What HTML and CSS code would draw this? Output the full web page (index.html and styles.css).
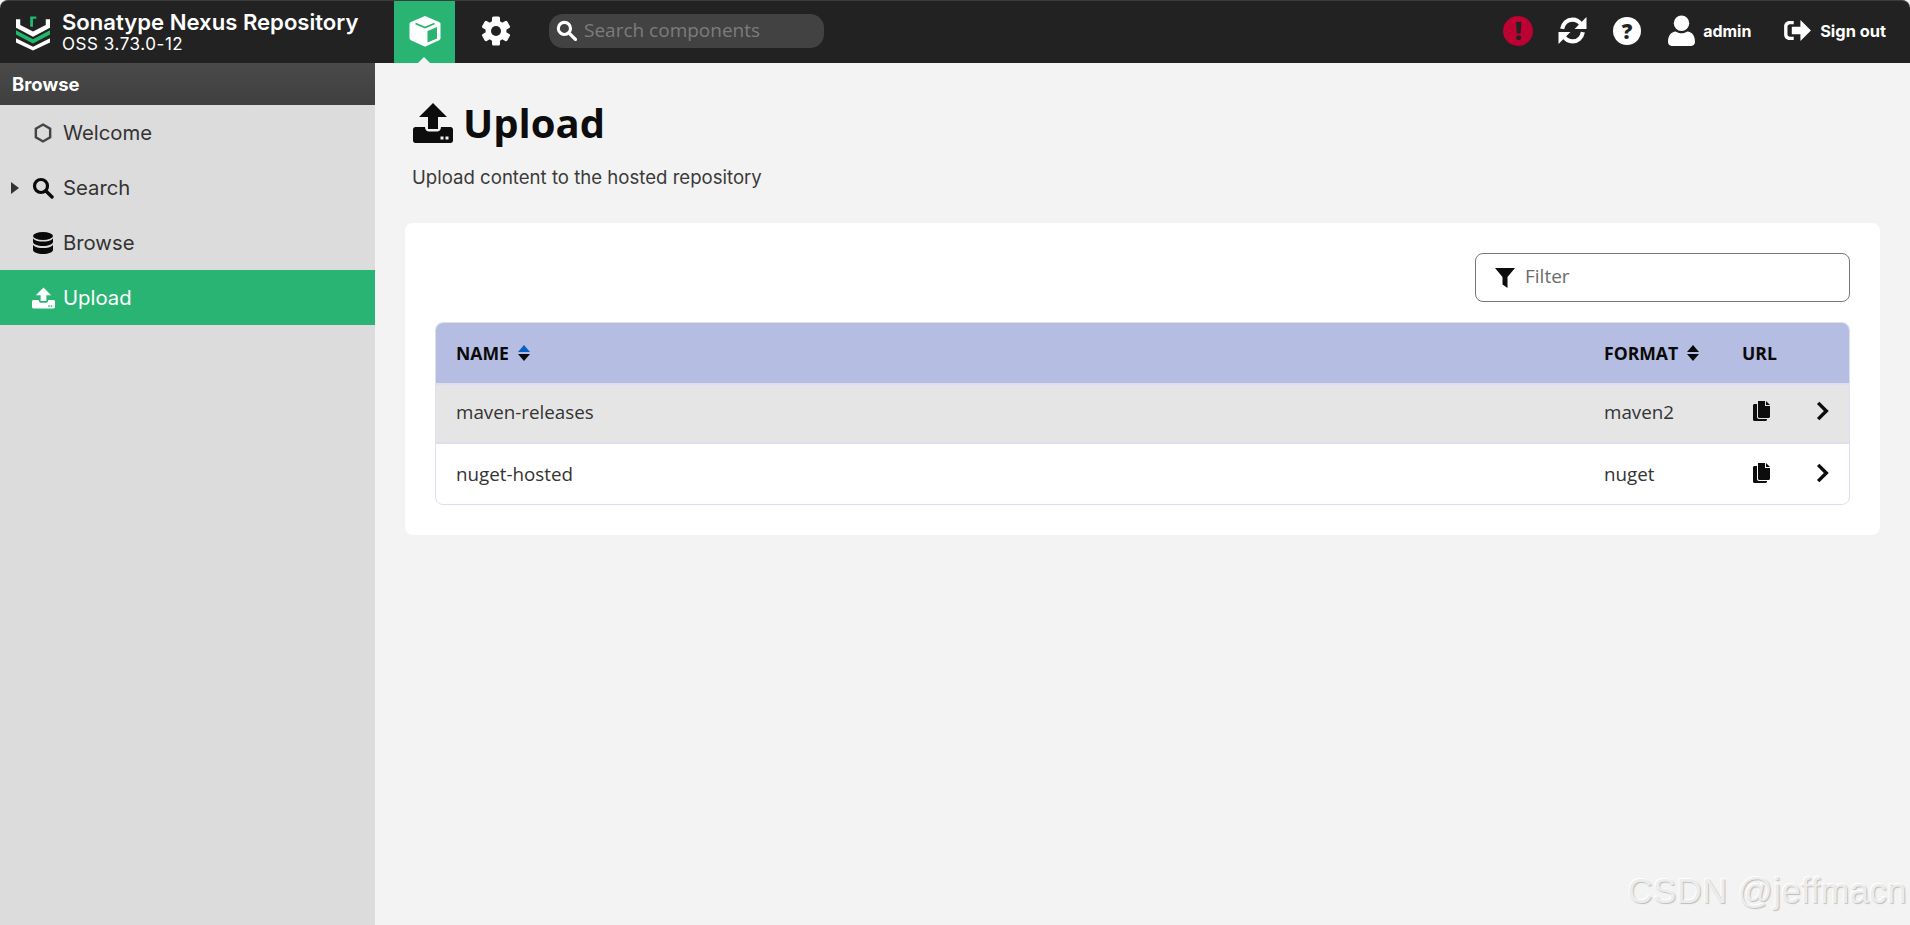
FILE: index.html
```html
<!DOCTYPE html>
<html lang="en">
<head>
<meta charset="utf-8">
<title>Upload - Nexus Repository</title>
<link rel="stylesheet" href="styles.css">
</head>
<body>
<div class="app">
  <header class="topbar">
    <div class="brand">
      <svg class="logo" viewBox="0 0 36 37"><path d="M0 4h4.500v6L18 17l13.500-7V4H36v9L18 22.500 0 13z" fill="#fff"/><path d="M0 15.500 18 25l18-9.500V20L18 29.500 0 20z" fill="#20b96a"/><path d="M0 24l18 9 18-9v4.500L18 37 0 28.500z" fill="#fff"/><path d="M15 1h6.500v2.500H18V12h-3z" fill="#20b96a"/></svg>
      <div class="brand-text">
        <div class="brand-name">Sonatype Nexus Repository</div>
        <div class="brand-version">OSS 3.73.0-12</div>
      </div>
    </div>
    <nav class="modes">
      <div class="mode mode-active">
        <svg class="cube" viewBox="0 0 32 32"><path d="M16 1 30 7c1 .5 1.500 1 1.500 2v14c0 1-.5 1.800-1.500 2.300L16.500 31.500h-1L2 25.300C1 24.800.5 24 .5 23V9c0-1 .5-1.500 1.500-2z" fill="#fff"/><path d="M6.500 8.500 16 12.500l9.500-4" fill="none" stroke="#29b473" stroke-width="1.800"/><path d="M18.500 16 28 12v11.500L18.500 27.500z" fill="#29b473"/></svg>
        <span class="mode-caret"></span>
      </div>
      <div class="mode mode-gear">
        <svg class="gear" viewBox="0 0 30 30">
          <circle class="gear-body" cx="15" cy="15" r="10.500"/>
          <rect class="gear-body" x="11" y="0.500" width="8" height="8" rx="1.500"/>
          <rect class="gear-body" x="11" y="0.500" width="8" height="8" rx="1.500" transform="rotate(60 15 15)"/>
          <rect class="gear-body" x="11" y="0.500" width="8" height="8" rx="1.500" transform="rotate(120 15 15)"/>
          <rect class="gear-body" x="11" y="0.500" width="8" height="8" rx="1.500" transform="rotate(180 15 15)"/>
          <rect class="gear-body" x="11" y="0.500" width="8" height="8" rx="1.500" transform="rotate(240 15 15)"/>
          <rect class="gear-body" x="11" y="0.500" width="8" height="8" rx="1.500" transform="rotate(300 15 15)"/>
          <circle class="gear-hole" cx="15" cy="15" r="5"/>
        </svg>
      </div>
    </nav>
    <div class="search">
      <svg class="search-icon" viewBox="0 0 20 20"><circle cx="8" cy="8" r="5.800" fill="none" stroke="#fff" stroke-width="3"/><path d="m12.500 12.500 6 6" stroke="#fff" stroke-width="3.200" stroke-linecap="round"/></svg>
      <span class="search-text">Search components</span>
    </div>
    <div class="actions">
      <div class="alert">!</div>
      <svg class="act-refresh" viewBox="0 0 28 28"><path fill="none" stroke="#fff" stroke-width="4" d="M4 12.500C5 7 9 3.500 14 3.500c3.500 0 6.300 1.500 8.300 4.500"/><path fill="#fff" d="M27.500 1v11.500H16z"/><path fill="none" stroke="#fff" stroke-width="4" d="M24 15.500C23 21 19 24.500 14 24.500c-3.500 0-6.300-1.500-8.300-4.500"/><path fill="#fff" d="M.5 27V15.500H12z"/></svg>
      <div class="help">?</div>
      <div class="user">
        <svg class="user-icon" viewBox="0 0 28 32"><circle cx="14" cy="8.500" r="8" fill="#fff"/><path fill="#fff" d="M0 28c0-7 3-10.500 8-11 3.500 2.500 8.500 2.500 12 0 5 .5 8 4 8 11 0 2.500-1.500 4-4 4H4c-2.500 0-4-1.500-4-4z"/></svg>
        <span class="user-name">admin</span>
      </div>
      <div class="signout">
        <svg class="signout-icon" viewBox="0 0 30 24"><path fill="#fff" d="M10 2v3.500H6c-1.300 0-2.500 1-2.500 2.500v8c0 1.500 1.200 2.500 2.500 2.500h4V22H5.500C2.500 22 0 19.500 0 16.500v-9C0 4.500 2.500 2 5.500 2z"/><path fill="#fff" d="M8 8h9V1l11 11-11 11v-7H8z"/></svg>
        <span class="signout-text">Sign out</span>
      </div>
    </div>
  </header>
  <div class="main">
    <aside class="sidebar">
      <div class="side-head">Browse</div>
      <div class="side-row">
        <svg class="side-icon" viewBox="0 0 20 20"><path d="M10 2.300 16.500 6v8L10 17.700 3.500 14V6z" fill="none" stroke="#444" stroke-width="2.200"/></svg>
        <span>Welcome</span>
      </div>
      <div class="side-row">
        <span class="side-caret"></span>
        <svg class="side-icon" viewBox="0 0 22 22"><circle cx="9" cy="9" r="6.500" fill="none" stroke="#0a0a0a" stroke-width="3.200"/><path d="m14 14 6 6" stroke="#0a0a0a" stroke-width="3.400" stroke-linecap="round"/></svg>
        <span>Search</span>
      </div>
      <div class="side-row">
        <svg class="side-icon" viewBox="0 0 20 22"><ellipse cx="10" cy="4" rx="10" ry="4" fill="#0a0a0a"/><path fill="#0a0a0a" d="M0 6.500C2 9 6 9.500 10 9.500s8-.5 10-3V10c0 2.300-4.500 4-10 4S0 12.300 0 10zM0 13c2 2.500 6 3 10 3s8-.5 10-3v5c0 2.300-4.500 4-10 4S0 20.300 0 18z"/></svg>
        <span>Browse</span>
      </div>
      <div class="side-row side-row-active">
        <svg class="side-icon side-upload" viewBox="0 0 24 22"><path fill="#fff" fill-rule="evenodd" d="M12 0 20 8h-5v6H9V8H4zM1.500 13H7c0 2 1.500 3 2.500 3h5c1 0 2.500-1 2.500-3h5.500c.8 0 1.500.7 1.500 1.500v6c0 .8-.7 1.500-1.500 1.500h-21C.7 22 0 21.300 0 20.500v-6C0 13.700.7 13 1.500 13zM17 18.500h1.500V20H17zm2.500 0H21V20h-1.500z"/></svg>
        <span>Upload</span>
      </div>
    </aside>
    <main class="content">
      <div class="page-head">
        <svg class="page-icon" viewBox="0 0 40 40"><path fill="#0d0d0d" fill-rule="evenodd" d="M20 0 34 14h-9v12H15V14H6zM2.500 24H12c0 3 2 4.500 4 4.500h8c2 0 4-1.500 4-4.500h9.500c1.400 0 2.500 1.100 2.500 2.500v11c0 1.400-1.100 2.500-2.500 2.500h-35C1.100 40 0 38.900 0 37.500v-11C0 25.100 1.100 24 2.500 24zM27.500 33.500h3v3h-3zm5 0h3v3h-3z"/></svg>
        <h1 class="page-title">Upload</h1>
      </div>
      <p class="page-sub">Upload content to the hosted repository</p>
      <section class="card">
        <div class="filter-row">
          <div class="filter">
            <svg class="filter-icon" viewBox="0 0 20 20"><path fill="#0d0d0d" d="M0 0h20l-7.500 9v11l-5-3.500V9z"/></svg>
            <span class="filter-text">Filter</span>
          </div>
        </div>
        <div class="table">
          <div class="tr th">
            <div class="cell">NAME<svg class="sort" viewBox="0 0 12 16"><path fill="#0a5fc4" d="M6 0l6 7H0z"/><path fill="#0a0a0a" d="M6 16l6-7H0z"/></svg></div>
            <div class="cell">FORMAT<svg class="sort" viewBox="0 0 12 16"><path fill="#0a0a0a" d="M6 0l6 7H0zM6 16l6-7H0z"/></svg></div>
            <div class="cell">URL</div>
            <div class="cell"></div>
          </div>
          <div class="tr td td-hover">
            <div class="cell">maven-releases</div>
            <div class="cell">maven2</div>
            <div class="cell"><svg class="copy" viewBox="0 0 18 20"><path fill="#0d0d0d" d="M5 0h7v5h5v10.500c0 .8-.7 1.500-1.500 1.500H6.500C5.700 17 5 16.300 5 15.500zM13 0l4 4h-4z"/><path fill="#0d0d0d" d="M0 4.500C0 3.700.7 3 1.500 3H4v13c0 1.100.9 2 2 2h8v.5c0 .8-.7 1.500-1.500 1.500h-11C.7 20 0 19.300 0 18.500z"/></svg></div>
            <div class="cell"><svg class="chev" viewBox="0 0 12 18"><path d="m2 1.500 7.500 7.500L2 16.500" fill="none" stroke="#0d0d0d" stroke-width="3.200"/></svg></div>
          </div>
          <div class="tr td">
            <div class="cell">nuget-hosted</div>
            <div class="cell">nuget</div>
            <div class="cell"><svg class="copy" viewBox="0 0 18 20"><path fill="#0d0d0d" d="M5 0h7v5h5v10.500c0 .8-.7 1.500-1.500 1.500H6.500C5.700 17 5 16.300 5 15.500zM13 0l4 4h-4z"/><path fill="#0d0d0d" d="M0 4.500C0 3.700.7 3 1.500 3H4v13c0 1.100.9 2 2 2h8v.5c0 .8-.7 1.500-1.500 1.500h-11C.7 20 0 19.300 0 18.500z"/></svg></div>
            <div class="cell"><svg class="chev" viewBox="0 0 12 18"><path d="m2 1.500 7.500 7.500L2 16.500" fill="none" stroke="#0d0d0d" stroke-width="3.200"/></svg></div>
          </div>
        </div>
      </section>
    </main>
  </div>
  <div class="watermark">CSDN @jeffmacn</div>
</div>
</body>
</html>
```

FILE: styles.css
```css
* { box-sizing: border-box; }
html, body { margin: 0; height: 100%; background: #f3f3f3; overflow: hidden; }
body { font-family: "Inter", "Liberation Sans", sans-serif; color: #2f2f2f; }
.app { position: relative; height: 925px; display: flex; flex-direction: column; }

.topbar {
  height: 63px; flex: none; display: flex; align-items: center;
  background: #222; border-top: 1px solid #3c3c3c; border-radius: 8px 8px 0 0;
  color: #fff;
}
.brand { width: 394px; flex: none; display: flex; align-items: center; padding-left: 16px; }
.logo { width: 34px; height: 36px; flex: none; margin-right: 12px; margin-top: 1px; }
.brand-text { line-height: 1; margin-top: -2px; }
.brand-name { font-size: 22.100px; font-weight: 600; line-height: 25px; white-space: nowrap; }
.brand-version { font-size: 17px; line-height: 18px; letter-spacing: .55px; }

.modes { display: flex; flex: none; height: 62px; }
.mode { width: 61px; height: 62px; display: flex; align-items: center; justify-content: center; position: relative; }
.mode-active { background: #29b473; }
.mode-gear { width: 82px; }
.cube { width: 32px; height: 32px; margin-bottom: 2px; }
.mode-caret {
  position: absolute; bottom: 0; left: 24px; width: 0; height: 0;
  border-left: 6px solid transparent; border-right: 6px solid transparent; border-bottom: 6px solid #f3f3f3;
}
.gear { width: 30px; height: 30px; margin-bottom: 2px; }
.gear-body { fill: #fff; }
.gear-hole { fill: #222; }

.search {
  margin-left: 12px; margin-bottom: 3px; width: 275px; height: 34px; flex: none; border-radius: 14px;
  background: #424242; display: flex; align-items: center; padding-left: 7px;
}
.search-icon { width: 21px; height: 21px; flex: none; }
.search-text { margin: 0 0 2px 7px; font-family: "Open Sans", sans-serif; font-size: 19px; color: #7c7c7c; white-space: nowrap; }

.actions { margin-left: auto; display: flex; align-items: center; margin-bottom: 3px; }
.alert {
  width: 30px; height: 30px; border-radius: 50%; background: #bb0233; color: #222;
  font-family: "Open Sans", sans-serif; font-weight: 800; font-size: 24px; line-height: 30px; text-align: center;
  margin-right: 25px;
}
.act-refresh { width: 29px; height: 29px; margin-right: 26px; flex: none; }
.help {
  width: 28px; height: 28px; border-radius: 50%; background: #fff; color: #222;
  font-family: "Open Sans", sans-serif; font-weight: 800; font-size: 21px; line-height: 28px; text-align: center;
  margin-right: 27px;
}
.user { display: flex; align-items: center; margin-right: 32px; }
.user-icon { width: 27px; height: 31px; flex: none; margin-right: 8px; }
.user-name { font-size: 16px; font-weight: 700; width: 49px; white-space: nowrap; }
.signout { display: flex; align-items: center; margin-right: 24px; }
.signout-icon { width: 29px; height: 23px; flex: none; margin-right: 7px; }
.signout-text { font-size: 16.400px; font-weight: 700; white-space: nowrap; }

.main { flex: 1; display: flex; min-height: 0; }
.sidebar { width: 375px; flex: none; background: #dcdcdc; }
.side-head {
  height: 42px; background: linear-gradient(#4a4a4a, #3f3f3f); color: #fff;
  font-size: 18.500px; font-weight: 700; line-height: 43px; padding-left: 12px;
}
.side-row {
  height: 55px; display: flex; align-items: center; padding-left: 32px; position: relative;
  font-size: 20.300px; color: #333;
}
.side-row-active { background: #29b473; color: #fff; }
.side-icon { width: 22px; height: 22px; flex: none; margin-right: 9px; }
.side-upload { width: 23px; margin-right: 8px; }
.side-caret {
  position: absolute; left: 11px; top: 22px; width: 0; height: 0;
  border-top: 6px solid transparent; border-bottom: 6px solid transparent; border-left: 8px solid #333;
}

.content { flex: 1; min-width: 0; padding: 38px 30px 0; }
.page-head { display: flex; align-items: center; padding-left: 8px; height: 44px; }
.page-icon { width: 40px; height: 40px; flex: none; margin-right: 10px; }
.page-title {
  margin: 0; font-family: "Open Sans", sans-serif; font-size: 40px; font-weight: 700; color: #0d0d0d; line-height: 44px;
}
.page-sub { margin: 21px 0 0 7px; font-size: 18.600px; line-height: 22px; color: #3a3a3a; }
.card { margin-top: 35px; height: 312px; background: #fff; border-radius: 8px; padding: 30px; }
.filter-row { display: flex; justify-content: flex-end; height: 49px; }
.filter {
  width: 375px; height: 49px; border: 1px solid #777; border-radius: 8px;
  display: flex; align-items: center; padding-left: 19px;
}
.filter-icon { width: 20px; height: 20px; flex: none; margin-right: 10px; }
.filter-text { font-family: "Open Sans", sans-serif; font-size: 19px; color: #6b6b6b; margin-bottom: 3px; }
.table {
  margin-top: 20px; border: 1px solid #dddff0; border-radius: 8px; overflow: hidden;
  font-family: "Open Sans", sans-serif;
}
.tr { display: grid; grid-template-columns: 1148px 138px 74px 1fr; align-items: center; }
.th { height: 62px; background: #b5bde2; font-weight: 700; font-size: 17.600px; color: #0a0a0a; border-bottom: 2px solid #dddff0; }
.td { height: 59px; font-size: 18.800px; color: #333; border-bottom: 2px solid #dddff0; }
.td:last-child { border-bottom: 0; height: 60px; }
.td-hover { background: #e5e5e5; padding-bottom: 3px; }
.cell { padding-left: 20px; display: flex; align-items: center; white-space: nowrap; }
.sort { width: 12px; height: 16px; margin-left: 9px; flex: none; }
.copy { width: 18px; height: 20px; margin: 0 0 2px 11px; }
.chev { width: 13px; height: 20px; margin-bottom: 2px; }

.watermark {
  position: absolute; right: 3px; bottom: 14px; font-family: "Liberation Sans", sans-serif; font-size: 34.500px;
  color: #ececec; letter-spacing: .5px; text-shadow: 1px 1px 1px #bdbdbd, -1px -1px 0 #fff; white-space: nowrap;
}
```
